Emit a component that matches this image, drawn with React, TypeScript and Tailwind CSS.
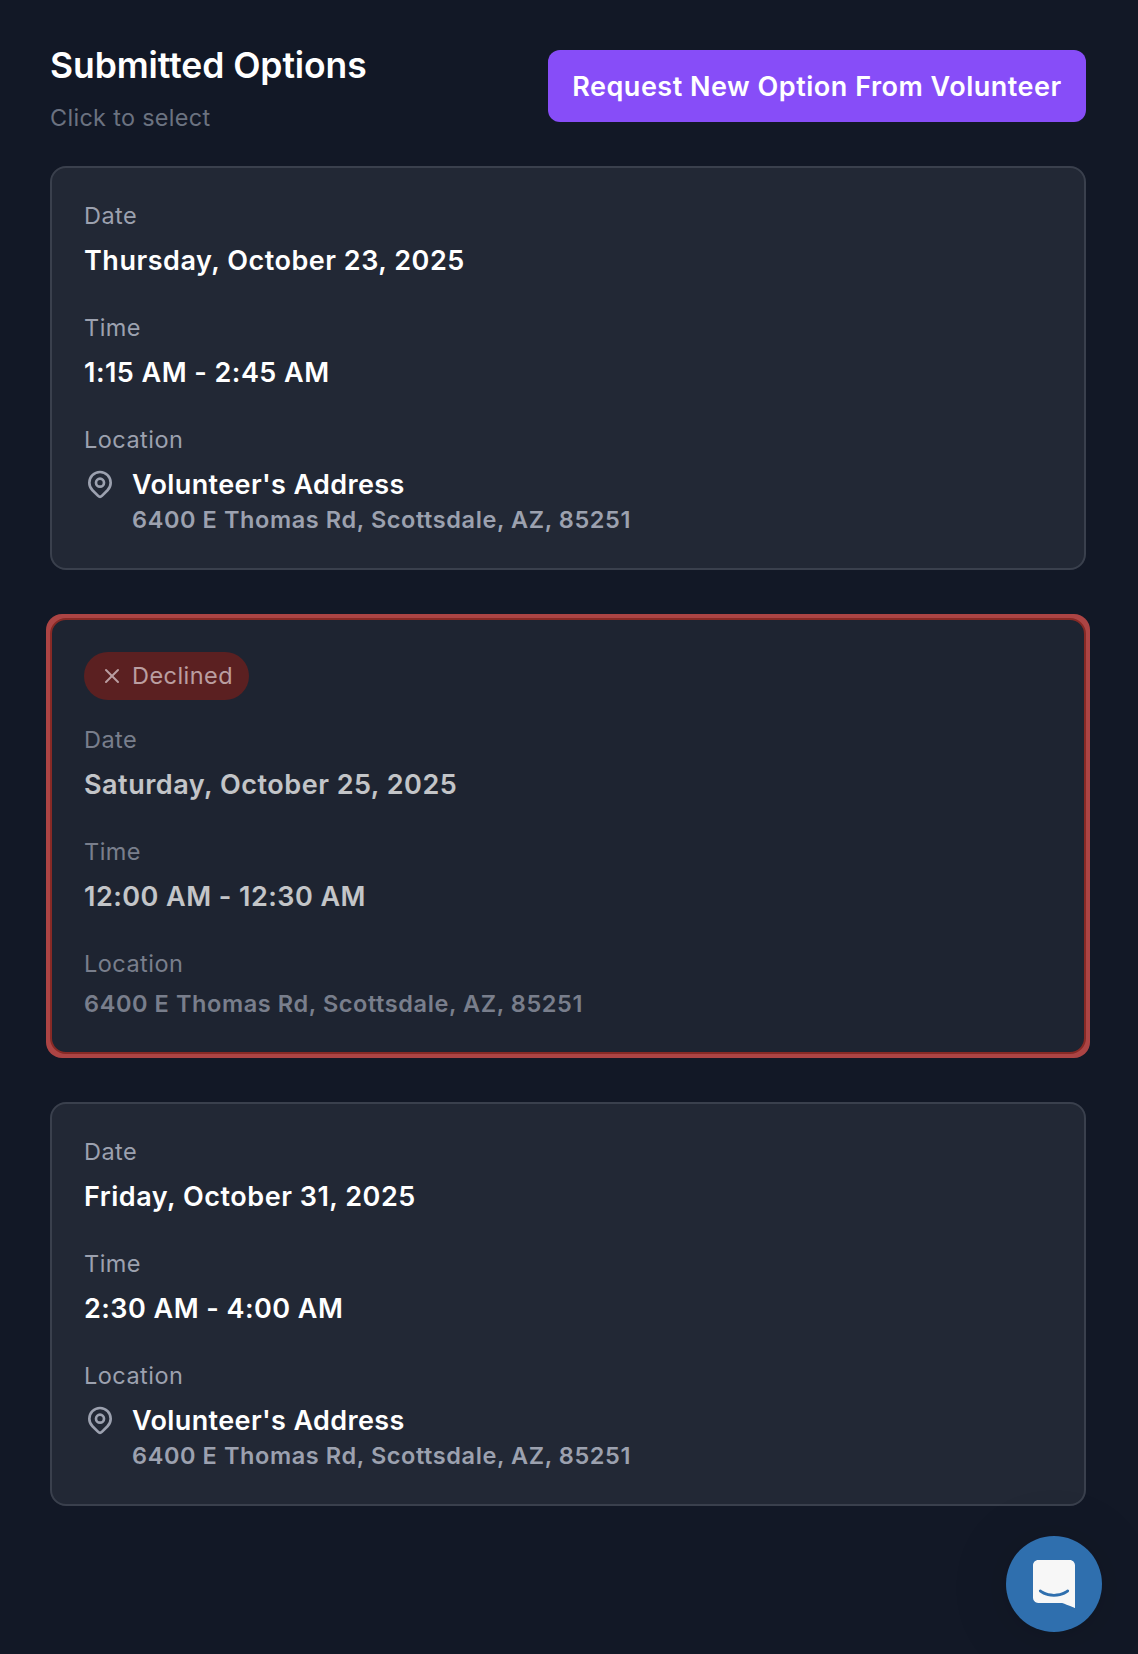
import clsx from 'clsx';
import { X } from 'lucide-react';

type Option = {
  date: string;
  time: string;
  place?: string;
  address: string;
  declined?: boolean;
};

const options: Option[] = [
  {
    date: 'Thursday, October 23, 2025',
    time: '1:15 AM - 2:45 AM',
    place: "Volunteer's Address",
    address: '6400 E Thomas Rd, Scottsdale, AZ, 85251',
  },
  {
    date: 'Saturday, October 25, 2025',
    time: '12:00 AM - 12:30 AM',
    address: '6400 E Thomas Rd, Scottsdale, AZ, 85251',
    declined: true,
  },
  {
    date: 'Friday, October 31, 2025',
    time: '2:30 AM - 4:00 AM',
    place: "Volunteer's Address",
    address: '6400 E Thomas Rd, Scottsdale, AZ, 85251',
  },
];

function PinIcon() {
  return (
    <svg
      viewBox="0 0 24 24"
      className="mt-1 h-8 w-8 shrink-0 text-[#9ca1af]"
      fill="none"
      stroke="currentColor"
      strokeWidth={2}
      strokeLinecap="round"
      strokeLinejoin="round"
    >
      <path d="M17.657 16.657L13.414 20.9a2 2 0 01-2.827 0l-4.244-4.243a8 8 0 1111.314 0z" />
      <path d="M15 11a3 3 0 11-6 0 3 3 0 016 0z" />
    </svg>
  );
}

function Label({ children }: { children: string }) {
  return <p className="mb-2 text-[23.5px] leading-8 tracking-[0.47px] text-[#9ca1af]">{children}</p>;
}

function Value({ children, className }: { children: string; className?: string }) {
  return (
    <p className={clsx('h-10 text-[27px] leading-[42px] font-semibold text-white', className)}>{children}</p>
  );
}

function Address({ children }: { children: string }) {
  return <p className="text-[23.5px] leading-8 font-semibold tracking-[0.6px] text-[#9ca1af]">{children}</p>;
}

function OptionCard({ option }: { option: Option }) {
  return (
    <div className={clsx('rounded-2xl', option.declined && '-m-1 bg-[#e0534e] p-1 opacity-75')}>
      <div
        className={clsx(
          'rounded-2xl border-2 p-8',
          option.declined ? 'border-[#ae3026] bg-[#222935]' : 'border-[#3a404d] bg-[#222835]'
        )}
      >
        {option.declined && (
          <div className="mb-6 flex h-12 w-fit items-center gap-2 rounded-full bg-[#742320] px-4 text-[#f3cbca]">
            <X className="h-6 w-6" strokeWidth={2} />
            <span className="text-[23.5px] leading-8 tracking-[0.45px]">Declined</span>
          </div>
        )}
        <div className="flex flex-col gap-8">
          <div>
            <Label>Date</Label>
            <Value className="tracking-[0.52px]">{option.date}</Value>
          </div>
          <div>
            <Label>Time</Label>
            <Value className="tracking-[0.46px]">{option.time}</Value>
          </div>
          <div>
            <Label>Location</Label>
            {option.place ? (
              <div className="flex gap-4">
                <PinIcon />
                <div>
                  <Value className="tracking-[0.38px]">{option.place}</Value>
                  <Address>{option.address}</Address>
                </div>
              </div>
            ) : (
              <Address>{option.address}</Address>
            )}
          </div>
        </div>
      </div>
    </div>
  );
}

function ChatLauncher() {
  return (
    <button className="fixed right-9 bottom-[22px] flex h-24 w-24 items-center justify-center rounded-full bg-[#2f6fae] shadow-[0_2px_12px_rgba(0,0,0,0.06),0_4px_64px_rgba(0,0,0,0.12)]">
      <svg viewBox="0 0 28 32" className="h-12 w-[42px]" fill="#f7f7f7">
        <path d="M28 32s-4.714-1.855-8.527-3.34H3.437C1.54 28.66 0 27.026 0 25.013V3.644C0 1.633 1.54 0 3.437 0h21.125c1.898 0 3.437 1.632 3.437 3.645v18.404H28V32zm-4.139-11.982a.88.88 0 00-1.292-.105c-.03.026-3.015 2.681-8.57 2.681-5.486 0-8.517-2.636-8.571-2.684a.88.88 0 00-1.29.107 1.01 1.01 0 00-.219.708.992.992 0 00.318.664c.142.128 3.537 3.15 9.762 3.15 6.226 0 9.621-3.022 9.763-3.15a.992.992 0 00.317-.664 1.01 1.01 0 00-.218-.707z" />
      </svg>
    </button>
  );
}

export default function App() {
  return (
    <div className="min-h-screen bg-[#121826] pt-[50px] pr-[52px] pl-[50px] font-['Inter',sans-serif]">
      <div className="mb-8 flex h-[84px] items-start justify-between">
        <div>
          <h2 className="h-8 text-[35.5px] leading-8 font-semibold tracking-[-0.08px] text-white">
            Submitted Options
          </h2>
          <p className="mt-5 text-[23.4px] leading-8 tracking-[0.33px] text-[#6b7280]">Click to select</p>
        </div>
        <button className="h-[72px] w-[538px] rounded-xl bg-[#874df8] pt-0.5 text-[27px] leading-10 font-semibold tracking-[0.51px] whitespace-nowrap text-white">
          Request New Option From Volunteer
        </button>
      </div>
      <div className="flex flex-col gap-12">
        {options.map((option) => (
          <OptionCard key={option.date} option={option} />
        ))}
      </div>
      <ChatLauncher />
    </div>
  );
}
